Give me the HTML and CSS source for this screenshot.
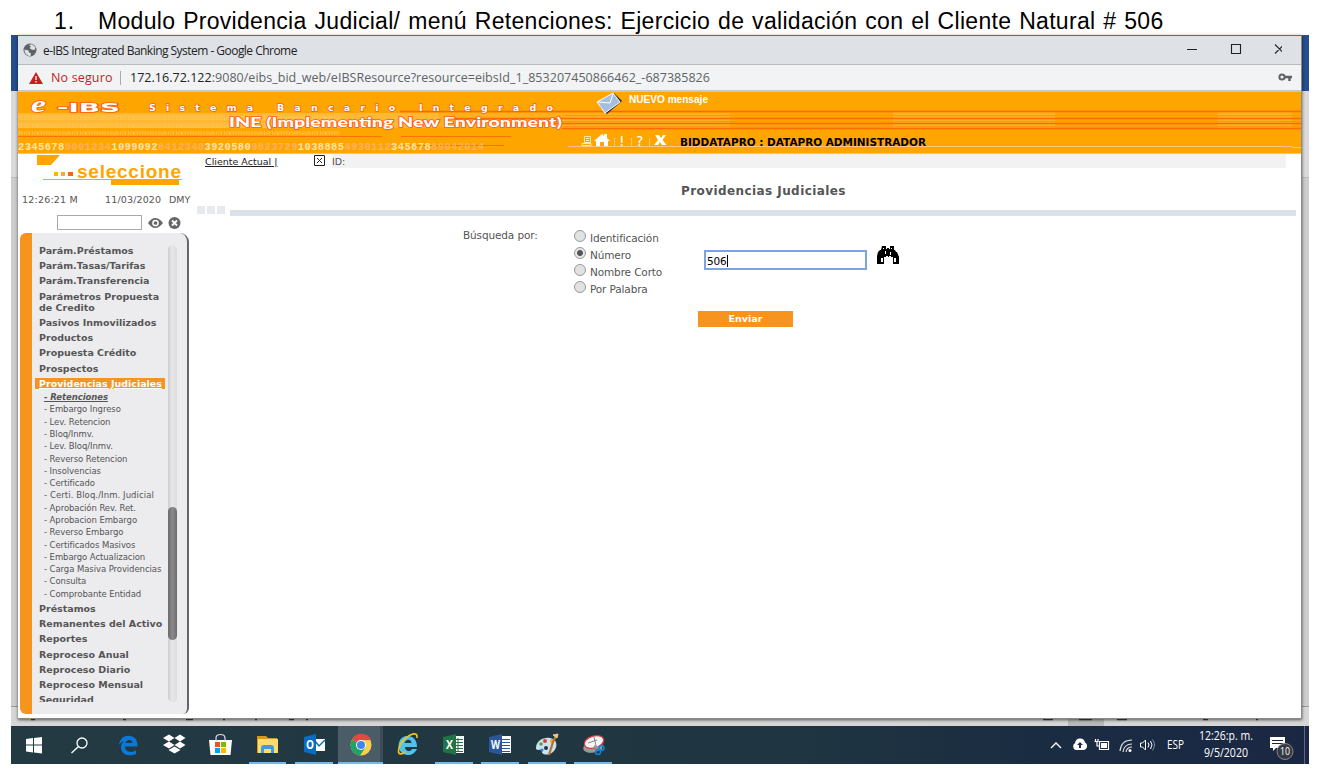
FILE: index.html
```html
<!DOCTYPE html>
<html lang="es">
<head>
<meta charset="utf-8">
<title>e-IBS Integrated Banking System</title>
<link rel="stylesheet" href="styles.css">
</head>
<body>
<h1 class="caption"><span class="num">1.</span><span class="captext">Modulo Providencia Judicial/ menú Retenciones: Ejercicio de validación con el Cliente Natural # 506</span></h1>
<div class="desktop">
  <div class="behind">
    <div class="word-ribbon"></div>
    <div class="word-tools"></div>
    <div class="word-page"></div>
    <svg class="word-status" viewBox="11 706 1298 20" width="1298" height="20">
      <path d="M11 706.500H1309" stroke="#999"/>
      <path d="M1068 715h36v11h-36z" fill="#b9b9b9"/>
      <path d="M31 719.500h4M123 719.500h3M186 719.500h7M223 719.500h2M255 719.500h2M289 719.500h5M306 719.500h2M1043 719.500h10M1079 719.500h13M1117 719.500h10M1203 719.500h5M1256 719.500h2" stroke="#444" stroke-width="1.500"/>
    </svg>
  </div>

  <div class="window">
    <div class="titlebar">
      <svg class="globe" viewBox="0 0 14 14" width="14" height="14"><circle cx="7" cy="7" r="6.500" fill="#5f6368"/><path d="M1.500 6.500l4 1 .5 2 2 1-.5 2.500C4 13 1.500 10.500 1.500 6.500zM6 2l3-.7 3.500 3-1 2.700-3-.5L6.500 5 8 3.500z" fill="#dee1e6"/></svg>
      <span class="wtitle">e-IBS Integrated Banking System - Google Chrome</span>
      <svg class="winbtns" viewBox="1186 42 96 16" width="96" height="16"><path d="M1187 49.500h10M1231.500 44.500h9v9h-9zM1275 44.500l9 9M1284 44.500l-9 9" fill="none" stroke="#222" stroke-width="1.100"/></svg>
    </div>
    <div class="address">
      <svg class="warn" viewBox="0 0 14 12" width="14" height="12"><path d="M7 0l7 12H0z" fill="#c5221f"/><path d="M7 4v4M7 9v1.500" stroke="#fff" stroke-width="1.300"/></svg>
      <span class="insecure">No seguro</span>
      <span class="vbar"></span>
      <span class="url"><b>172.16.72.122</b>:9080/eibs_bid_web/eIBSResource?resource=eibsId_1_853207450866462_-687385826</span>
      <svg class="key" viewBox="0 0 14 9" width="14" height="9"><circle cx="4" cy="4" r="2.600" fill="none" stroke="#5f6368" stroke-width="2"/><path d="M6.500 4H14M11.500 4v4" stroke="#5f6368" stroke-width="2.500"/></svg>
    </div>

    <svg class="banner" viewBox="18 92 1283 62" width="1283" height="62">
      <defs>
        <pattern id="bits" width="48" height="8" patternUnits="userSpaceOnUse" x="18" y="113"><text x="0" y="7" class="bittext" textLength="48">010100101010</text></pattern>
      </defs>
      <path d="M18 92h1283v62H18z" fill="#ffa500"/>
      <path d="M18 113h420v15H18z" fill="#ffb833"/>
      <path d="M438 113h292v15H438zM893 111h162v18H893zM1218 111h74v18h-74z" fill="#ffb020"/>
      <path d="M18 113h322v22H18z" fill="url(#bits)"/>
      <path d="M400 111.500H1301M450 118.500H1301M520 123.500H1301M562 128.500H1301" stroke="#ff6a00" stroke-width="1.300"/>
      <path d="M562 115.500H1301M562 121.500H1301M562 126.500H1301" stroke="#ff9a10"/>
      <path d="M18 136.500H382M401 136.500H511M400 145.500H504" stroke="#ff7200"/>
      <path d="M568 146.500H1292M1292 147.500h9" stroke="#ffc680"/>
      <path d="M18 153.500H1301" stroke="#ffc464"/>
      <g class="brand">
        <text x="31" y="112" class="brand-e" textLength="15" lengthAdjust="spacingAndGlyphs">e</text>
        <text x="57" y="111.500" class="brand-ibs" textLength="63" lengthAdjust="spacingAndGlyphs">-IBS</text>
        <text x="149" y="111" class="brand-sis" textLength="404">Sistema Bancario Integrado</text>
        <text x="229" y="126.500" class="brand-ine" textLength="333" lengthAdjust="spacingAndGlyphs">INE (Implementing New Environment)</text>
      </g>
      <text x="18" y="149.500" class="digits" textLength="466"><tspan>2345678</tspan><tspan class="dim">9001234</tspan><tspan>1099092</tspan><tspan class="dim">8412348</tspan><tspan>3920580</tspan><tspan class="dim">9823729</tspan><tspan>1038885</tspan><tspan class="dim">4930112</tspan><tspan>345678</tspan><tspan class="dim">89042014</tspan></text>
      <g>
        <path d="M600 107l14-14 8 8-15 13z" fill="#2a2740"/>
        <path d="M597 102l16-9 7 9-15 11z" fill="#a4bfe0" stroke="#fff"/>
        <path d="M598 102l12 1 3-9" fill="none" stroke="#fff"/>
      </g>
      <text x="629" y="103" class="nuevo" textLength="79" lengthAdjust="spacingAndGlyphs">NUEVO mensaje</text>
      <path d="M584.500 136.500h6v6h-6zM586 138.500h3M586 140.500h3M582 145.500h9v-2h-9z" fill="none" stroke="#ffe7bd"/>
      <path d="M594 141l8-7 2 2v-2h3v4l3 3h-2v5h-4v-4h-4v4h-4v-5z" fill="#fff"/>
      <path d="M614.500 138v8M631.500 138v8M649.500 138v8" stroke="#ffc870"/>
      <text x="619" y="146" class="tool">!</text><text x="636" y="146" class="tool">?</text>
      <path d="M655 135h4l2 3 2-3h3l-3.500 5 4 5h-4.500l-2-3-2 3h-4l4-5z" fill="#fff"/>
      <text x="680" y="146" class="user" textLength="246" lengthAdjust="spacingAndGlyphs">BIDDATAPRO : DATAPRO ADMINISTRADOR</text>
    </svg>

    <div class="app">
      <div class="side">
        <svg class="logo" viewBox="18 154 180 36" width="180" height="36">
          <path d="M37 155h23l-9 10H37zM111 180h68v5h-68z" fill="#ffa500"/>
          <path d="M43 179.500h139" stroke="#ffa500"/>
          <path d="M54 172h4v4h-4z" fill="#ffb400"/><path d="M61 172h4v4h-4z" fill="#ffa530"/><path d="M68 172h5v4h-5z" fill="#f60"/>
          <text x="77" y="178" class="sel" textLength="104">seleccione</text>
        </svg>
        <div class="clock"><span class="time">12:26:21 M</span><span class="date">11/03/2020</span><span>DMY</span></div>
        <div class="search">
          <div class="sbox"></div>
          <svg viewBox="148 216 33 14" width="33" height="14"><path d="M148 223q7-10 15 0q-8 10-15 0z" fill="#666"/><circle cx="155.500" cy="223" r="2.600" fill="none" stroke="#fff" stroke-width="1.500"/><circle cx="174.500" cy="223" r="6" fill="#666"/><path d="M172 220.500l5 5M177 220.500l-5 5" stroke="#fff" stroke-width="1.800"/></svg>
        </div>
        <div class="panel">
          <ul class="menu">
            <li>Parám.Préstamos</li><li>Parám.Tasas/Tarifas</li><li>Parám.Transferencia</li><li>Parámetros Propuesta<br>de Credito</li><li>Pasivos Inmovilizados</li><li>Productos</li><li>Propuesta Crédito</li><li>Prospectos</li>
            <li class="open"><span>Providencias Judiciales</span></li>
            <li class="group"><ul class="submenu"><li class="current">- Retenciones</li><li>- Embargo Ingreso</li><li>- Lev. Retencion</li><li>- Bloq/Inmv.</li><li>- Lev. Bloq/Inmv.</li><li>- Reverso Retencion</li><li>- Insolvencias</li><li>- Certificado</li><li class="wide">- Certi. Bloq./Inm. Judicial</li><li>- Aprobación Rev. Ret.</li><li>- Aprobacion Embargo</li><li>- Reverso Embargo</li><li>- Certificados Masivos</li><li>- Embargo Actualizacion</li><li>- Carga Masiva Providencias</li><li>- Consulta</li><li>- Comprobante Entidad</li></ul></li>
            <li>Préstamos</li><li>Remanentes del Activo</li><li>Reportes</li><li>Reproceso Anual</li><li>Reproceso Diario</li><li>Reproceso Mensual</li><li>Seguridad</li>
          </ul>
          <div class="track"><div class="thumb"></div></div>
        </div>
      </div>

      <div class="main">
        <div class="clientbar">
          <div class="client"><span>Cliente Actual |</span></div>
          <svg viewBox="0 0 11 11" width="11" height="11"><path d="M.5.5h10v10H.5zM3 3l5 5M8 3L3 8" fill="#fff" stroke="#222"/></svg>
          <span class="idlabel">ID:</span>
        </div>
        <h2 class="heading">Providencias Judiciales</h2>
        <div class="rule"><i></i><i></i><i></i><span></span></div>
        <form class="form">
          <div class="label">Búsqueda por:</div>
          <div class="radios">
            <div class="opt"><i class="radio"></i><span>Identificación</span></div>
            <div class="opt"><i class="radio on"></i><span>Número</span></div>
            <div class="opt"><i class="radio"></i><span>Nombre Corto</span></div>
            <div class="opt"><i class="radio"></i><span>Por Palabra</span></div>
          </div>
          <div class="field">506<span class="caret"></span></div>
          <svg class="bino" viewBox="0 0 22 19" width="22" height="19"><path d="M5 0h4v3h1V2h2v1h1V0h4v4h1l1 2h1l2 5v7h-6v-7h-2v-1h-2v1h-1v-1H9v1H7v7H0v-8l1-4 2-2h1z"/><path d="M4 12h2v4H4zM17 12h2v4h-2zM6 2h1v1H6zM14 2h1v1h-1zM8 5h1v3H8zM13 6h1v3h-1z" fill="#fff"/></svg>
        </form>
        <div class="submit">Enviar</div>
      </div>
    </div>
  </div>

  <svg class="taskbar" viewBox="11 726 1298 38" width="1298" height="38">
    <defs>
      <linearGradient id="bar"><stop offset="0" stop-color="#233a43"/><stop offset=".6" stop-color="#1f3541"/><stop offset=".8" stop-color="#1a2c42"/><stop offset="1" stop-color="#1a2744"/></linearGradient>
    </defs>
    <path d="M11 726h1298v38H11z" fill="url(#bar)"/>
    <path d="M338 726h42v38h-42z" fill="#4a5d66"/><path d="M380 726h3v38h-3z" fill="#3b4b58"/>
    <path d="M249 762h37v2h-37zM295 762h38v2h-38zM338 762h45v2h-45zM435 762h38v2h-38zM481 762h38v2h-38zM528 762h38v2h-38zM574 762h38v2h-38z" fill="#76b9ed"/>
    <path d="M26 739l7-1v6.500h-7zM34 738l8-1v7.500h-8zM26 745.500h7v7l-7-1zM34 745.500h8v8l-8-1z" fill="#fff"/>
    <g fill="none" stroke="#fff" stroke-width="1.300"><circle cx="82" cy="743" r="5"/><path d="M78.500 746.500l-7 6.500"/></g>
    <path d="M119 745c1-7 6-10 11-9 6 1 7.500 5 7.500 10.500H125c0 6 7 6.500 11 4v3.500c-6 3-14 1-15-5.500-.5-4 2-7 4-8-3 1-5 3-6 4.500zM125.500 743h7c0-4-6-4-7 0z" fill="#0c78d7"/>
    <path d="M169 734.500l5.500 3.500-5.500 3.500-6-3.500zM180 734.500l5.500 3.500-5.500 3.500-5.500-3.500zM169 741.500l5.500 3.500-5.500 3.500-6-3.500zM180 741.500l5.500 3.500-5.500 3.500-5.500-3.500zM168.500 750l6-3.500 6 3.500-6 3.500z" fill="#fff"/>
    <path d="M209 740h23l-1.500 15h-20z" fill="#fff"/><path d="M216 741v-3q0-3.500 4.500-3.500t4.500 3.500v3" fill="none" stroke="#ddd" stroke-width="1.200"/>
    <path d="M215 742h5v5h-5z" fill="#f25022"/><path d="M221 742h5v5h-5z" fill="#7fba00"/><path d="M215 748h5v5h-5z" fill="#00a4ef"/><path d="M221 748h5v5h-5z" fill="#ffb900"/>
    <path d="M257 736h9l2 2h9v15h-20z" fill="#d49a16"/><path d="M258 739h20v14h-20z" fill="#ffdb6b"/><path d="M261 753v-5q0-3 3-3h7q3 0 3 3v5h-3v-4h-7v4z" fill="#3d9be3"/>
    <path d="M315 739h10v12h-10z" fill="#fff"/><path d="M315 741l4 5 6-6" fill="none" stroke="#0a6dc4" stroke-width="1.500"/><path d="M304 737l12-3v21l-12-3z" fill="#0a6dc4"/><text x="306" y="749" class="ic" textLength="8" lengthAdjust="spacingAndGlyphs">O</text>
    <g><circle cx="361" cy="745" r="10.500" fill="#fdd04b"/><path d="M361 745L352 739.700A10.500 10.500 0 0 1 371 740h-10z" fill="#e04a3f"/><path d="M352 739.700A10.500 10.500 0 0 0 360 755.500l5.500-8-4.500-2.500z" fill="#1fa463"/><circle cx="361" cy="745" r="5" fill="#fff"/><circle cx="361" cy="745" r="4" fill="#4285f4"/></g>
    <path d="M398.500 745c1-8 6-9.500 10-9 6 1 8.500 5 8.500 11h-12c0 5 6 5 7 2h5c-3 6-8 7-12 5.500-4-1.500-6.500-5-6.500-9.500zM404.500 743h7c0-4.500-6-4.500-7 0z" fill="#4fc3f0"/><path d="M417 738c1-7-7-4-11 0-5 4-8 10-7.500 14 .5 3 4 2 6.500 0" fill="none" stroke="#f2c21c" stroke-width="1.700"/>
    <path d="M454 736h10v17h-10z" fill="#fff"/><path d="M458 738v14M455 739.500h8M455 742.500h8M455 745.500h8M455 748.500h8M455 751.500h8" stroke="#217346"/><path d="M443 737l13-3v21l-13-3z" fill="#217346"/><text x="446" y="749" class="ic" textLength="7" lengthAdjust="spacingAndGlyphs">X</text>
    <path d="M500 736h11v17h-11z" fill="#fff"/><path d="M502 739.500h8M502 742.500h8M502 745.500h8M502 748.500h8M502 751.500h8" stroke="#2b579a"/><path d="M489 737l13-3v21l-13-3z" fill="#2b579a"/><text x="491" y="749" class="ic" textLength="9" lengthAdjust="spacingAndGlyphs">W</text>
    <path d="M536 748c0-7 7-11 14-10 8 1 8 10 3 14-5 4-12 3-11-1 0-3-6 1-6-3z" fill="#c7e2f2"/><circle cx="541" cy="744" r="1.800" fill="#6b9b37"/><circle cx="545" cy="741" r="2" fill="#df3b31"/><circle cx="552" cy="741" r="2" fill="#e9a921"/><circle cx="546" cy="748" r="2" fill="#1f3541"/><circle cx="542" cy="750" r="1.500" fill="#317ccc"/><path d="M549 755l4-13 3-6" fill="none" stroke="#b9712f" stroke-width="2.200"/><path d="M553 735l4 3 1-4z" fill="#f0c690" stroke="#f0c690"/>
    <g><ellipse cx="593" cy="747" rx="10" ry="5.500" fill="#999" transform="rotate(-12 593 747)"/><ellipse cx="594" cy="742" rx="10" ry="6" fill="#f5f5f5" stroke="#d83b40" stroke-width="1.300" transform="rotate(-17 594 742)"/><path d="M588 743l9-3M594 737l2 9" stroke="#888"/><path d="M594 746l8 3" stroke="#999" stroke-width="2"/><circle cx="601.500" cy="748" r="2.500" fill="none" stroke="#1683cf" stroke-width="1.500"/><circle cx="598" cy="752" r="2.500" fill="none" stroke="#1683cf" stroke-width="1.500"/></g>
    <path d="M1051 748l5-5 5 5" fill="none" stroke="#fff" stroke-width="1.400"/>
    <path d="M1075.500 750a4 4 0 0 1-.5-7q1-5 5.500-4.500 3.500 0 4.500 4 2.500 1 2 4.500-1 3-3 3z" fill="#fff"/><path d="M1079 748v-3h-2l3-3 3 3h-2v3z" fill="#1a2c42"/>
    <path d="M1099.500 741.500h9v8h-9zM1094.500 741.500h4M1095.500 739v3M1098 739v3M1097 742v4h2" fill="none" stroke="#fff" stroke-width="1.200"/><path d="M1101 743h6v5h-6z" fill="#fff"/>
    <path d="M1120 751q1-11 12-11M1123 752q1-8 9-8M1126 752q1-5 6-5" fill="none" stroke="#ddd" stroke-width="1.200"/><circle cx="1130" cy="750.500" r="1.500" fill="#fff"/>
    <path d="M1140.500 743h2l3-3v10l-3-3h-2zM1148 742.500q2 2.500 0 5M1150.500 741q3 4 0 8" fill="none" stroke="#fff"/><path d="M1152.500 739.500q4 5.500 0 11" fill="none" stroke="#8590a0"/>
    <text x="1167" y="748.500" class="tray" textLength="17" lengthAdjust="spacingAndGlyphs">ESP</text>
    <text x="1199" y="740" class="tray" textLength="54" lengthAdjust="spacingAndGlyphs">12:26:p. m.</text>
    <text x="1204" y="757" class="tray" textLength="44" lengthAdjust="spacingAndGlyphs">9/5/2020</text>
    <path d="M1270 737h15v11h-9l-3 3v-3h-3z" fill="#fff"/><path d="M1272 740.500h11M1272 743.500h11" stroke="#1a2744"/>
    <circle cx="1285" cy="751.500" r="8" fill="#353a42" stroke="#888" stroke-width="1"/><text x="1280" y="755" class="badge" textLength="10" lengthAdjust="spacingAndGlyphs">10</text>
    <path d="M1304.500 726v38" stroke="#5d6a80"/>
  </svg>
</div>
</body>
</html>
```
FILE: styles.css
```css
* { box-sizing: border-box; }
body { margin: 0; width: 1322px; height: 778px; overflow: hidden; background: #fff; font-family: "DejaVu Sans", sans-serif; }
ul { list-style: none; margin: 0; padding: 0; }
svg { display: block; flex: none; }

.caption { display: flex; align-items: center; height: 35px; margin: 0; padding: 7px 0 0 54px; font: 400 23px/28px "Liberation Sans", sans-serif; color: #000; white-space: nowrap; }
.num { width: 44px; letter-spacing: 1px; }
.captext { letter-spacing: 0.3px; word-spacing: 1.200px; }

.desktop { position: relative; display: flex; flex-direction: column; width: 1298px; height: 729px; margin-left: 11px; }
.behind { display: flex; flex-direction: column; height: 691px; background: #dcdcdc; }
.word-ribbon { height: 56px; background: #254e8f; }
.word-tools { height: 87px; background: #dadada; border-bottom: 1px solid #bbb; }
.word-page { height: 528px; background: #cdcdcd; }
.word-status { background: #d6d6d6; }

.window { position: absolute; left: 7px; top: 0; display: flex; flex-direction: column; width: 1284px; height: 684px; background: #fff; border-top: 1px solid #1c7cd0; border-right: 1px solid #8a8a8a; border-bottom: 1px solid #888; box-shadow: 0 1px 3px rgba(0, 0, 0, .6); }
.titlebar { display: flex; align-items: center; height: 29px; padding: 0 19px 0 5px; background: #dee1e6; border-bottom: 1px solid #b8babd; }
.wtitle { flex: 1; padding-left: 6px; font: 12px "Open Sans", sans-serif; letter-spacing: -0.530px; color: #222; }
.address { display: flex; align-items: center; height: 27px; padding: 0 9px 0 11px; background: #f1f3f4; border-bottom: 2px solid #c5c8cc; font: 12.5px "Open Sans", sans-serif; white-space: nowrap; }
.insecure { flex: none; width: 77px; padding-left: 8px; letter-spacing: 0.150px; color: #c5221f; }
.vbar { flex: none; width: 1px; height: 14px; margin-right: 9px; background: #aaa; }
.url { flex: 1; letter-spacing: 0.030px; color: #5f6368; }
.url b { font-weight: 400; color: #202124; }

.banner { height: 62px; }
.bittext { font: 8px "Liberation Mono", monospace; fill: #ffc95c; }
.brand text { fill: #fff; stroke: #ff5a18; stroke-width: 1.5px; paint-order: stroke; font-family: "DejaVu Sans", sans-serif; font-weight: 700; }
.brand .brand-e { font: italic 700 23px "Liberation Serif", serif; }
.brand .brand-ibs { font-size: 13px; }
.brand .brand-sis { font-size: 9.500px; }
.brand .brand-ine { font-size: 14px; font-family: Lato, sans-serif; font-weight: 900; }
.digits { font: 700 10.500px "Liberation Mono", monospace; fill: #ffe4a6; }
.dim { fill: #ffb25c; }
.nuevo { font: 700 10px "Liberation Sans", sans-serif; fill: #fff; }
.tool { font: 14px "DejaVu Sans", sans-serif; fill: #fff; }
.user { font: 700 10.500px "DejaVu Sans", sans-serif; fill: #000; }

.app { display: flex; flex: 1; background: #fff; }
.side { display: flex; flex-direction: column; width: 179px; }
.sel { font: 700 19px "Liberation Sans", sans-serif; fill: #ffa500; }
.clock { display: flex; height: 19px; padding-left: 4px; font-size: 9.500px; line-height: 19px; color: #555; white-space: nowrap; }
.time { width: 83px; letter-spacing: 0.200px; }
.date { width: 64px; letter-spacing: 0.150px; }
.search { display: flex; align-items: center; gap: 6px; height: 19px; margin-top: 4px; padding-left: 39px; }
.sbox { width: 85px; height: 15px; border: 1px solid #aaa; }
.panel { display: flex; justify-content: space-between; width: 169px; height: 481px; margin: 1px 0 0 2px; padding: 12px 10px 0 0; background: #ececef; border-left: 12px solid #f7941d; border-right: 2px solid #666; border-radius: 6px 9px 6px 6px; }
.menu { width: 133px; height: 459px; margin-top: -2px; overflow: hidden; font-size: 9.500px; line-height: 11.200px; font-weight: 700; color: #555; white-space: nowrap; }
.menu > li { padding: 2px 0 2px 7px; }
.menu > .open { padding: 2px 0 2px 3px; color: #fff; }
.open span { display: block; width: 131px; padding-left: 4px; background: #f7941d; text-decoration: underline; }
.menu > .group { padding: 0 0 1px 12px; }
.submenu { font: 8.500px/12.300px "DejaVu Sans", sans-serif; letter-spacing: -0.080px; }
.submenu .current { font-weight: 700; font-style: italic; text-decoration: underline; }
.submenu .wide { letter-spacing: 0.080px; }
.track { width: 9px; height: 457px; padding-top: 262px; border-radius: 5px; background: linear-gradient(90deg, #ccc, #e6e6e6 40%, #ddd); }
.thumb { height: 133px; border-radius: 5px; background: linear-gradient(90deg, #6c6c6e, #8a8a8c 50%, #6c6c6e); }

.main { display: flex; flex-direction: column; flex: 1; color: #555; }
.clientbar { display: flex; align-items: flex-start; width: 1089px; height: 14px; padding: 1px 0 0 0; background: linear-gradient(90deg, #fff 135px, #f2f2f2 135px); font-size: 9.500px; line-height: 14px; }
.client { width: 117px; padding-left: 8px; color: #222; text-decoration: underline; }
.idlabel { padding-left: 7px; }
.heading { height: 34px; margin: 6px 0 0; padding-left: 484px; font-size: 12px; line-height: 34px; letter-spacing: 0.420px; white-space: nowrap; }
.rule { display: flex; align-items: flex-start; gap: 2px; height: 10px; margin-top: -2px; }
.rule i { width: 8px; height: 8px; background: #e6eaee; }
.rule span { width: 1066px; height: 6px; margin: 4px 0 0 3px; background: #dbe1e8; }
.form { display: flex; align-items: flex-start; height: 95px; font-size: 10.500px; letter-spacing: -0.130px; }
.label { width: 377px; padding: 13px 0 0 266px; white-space: nowrap; }
.radios { width: 130px; padding-top: 14px; }
.opt { display: flex; height: 17.100px; }
.opt span { padding: 2px 0 0 4px; line-height: 13px; }
.radio { width: 12px; height: 12px; border: 1px solid #999; border-radius: 50%; background: #e2e2e2; }
.radio.on { background: radial-gradient(circle, #555 0 2.500px, #e8e8e8 3.500px); }
.field { display: flex; align-items: center; width: 163px; height: 20px; margin-top: 34px; padding: 1px 0 0 1px; background: #fff; border: 2px solid #7ba3e6; color: #000; }
.caret { width: 1px; height: 12px; background: #000; }
.bino { margin: 30px 0 0 10px; }
.submit { width: 95px; height: 16px; margin-left: 501px; background: #f7941d; color: #fff; font-size: 9.500px; font-weight: 700; line-height: 16px; text-align: center; }

.taskbar { height: 38px; }
.ic { font: 700 12px "Open Sans", sans-serif; fill: #fff; }
.tray { font: 12px "Open Sans", sans-serif; fill: #fff; }
.badge { font: 10px "Open Sans", sans-serif; fill: #fff; }
```
